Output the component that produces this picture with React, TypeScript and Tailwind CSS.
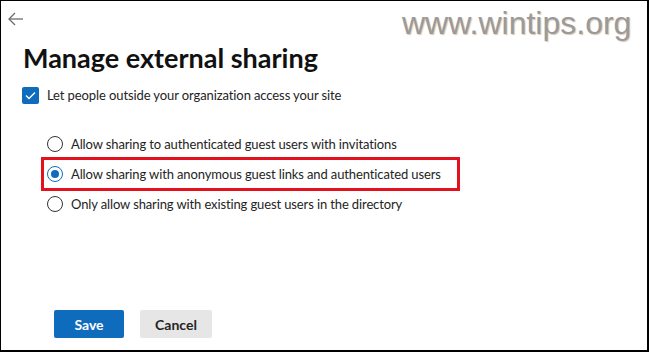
import React from "react";

function Radio({ checked, label }: { checked?: boolean; label: string }) {
  return (
    <div className="flex items-center h-[30px]">
      <span
        className={
          "w-[16px] h-[16px] rounded-full border flex items-center justify-center shrink-0 " +
          (checked ? "border-[#0f6cbd]" : "border-[#333333]")
        }
      >
        {checked && <span className="w-[8px] h-[8px] rounded-full bg-[#0f6cbd]" />}
      </span>
      <span className="ml-[8px] text-[13px] tracking-[-0.12px] text-[#242424] leading-none">{label}</span>
    </div>
  );
}

export default function App() {
  return (
    <div
      className="relative w-[649px] h-[352px] bg-white border-t border-l border-r-2 border-b-2 border-black overflow-hidden"
      style={{ fontFamily: 'Lato, "Noto Sans", sans-serif' }}
    >
      <div
        className="absolute left-[401px] top-[2px] text-[32px] text-[#9a9a9a] leading-[40px]"
        style={{ fontFamily: '"Liberation Sans", Arial, sans-serif', textShadow: "1px 1px 1px #d9c9b8" }}
      >
        www.wintips.org
      </div>
      <div className="pl-[6px] pt-[10px]">
        <svg width="17" height="16" viewBox="0 0 17 16" fill="none" stroke="#6b6b6b" strokeWidth="1.3">
          <path d="M16 8H2" />
          <path d="M8 2L2 8l6 6" />
        </svg>
      </div>
      <h1 className="pl-[22px] mt-[13px] text-[27px] font-bold text-[#111] leading-[36px]">
        Manage external sharing
      </h1>
      <div className="flex items-center pl-[21px] mt-[11px]">
        <span className="w-[17px] h-[17px] rounded-[2px] bg-[#0f6cbd] flex items-center justify-center">
          <svg width="11" height="9" viewBox="0 0 11 9" fill="none" stroke="white" strokeWidth="1.3">
            <path d="M1 4.5l3 3L10 1.5" />
          </svg>
        </span>
        <span className="ml-[8px] text-[13px] tracking-[-0.1px] text-[#242424] leading-none">
          Let people outside your organization access your site
        </span>
      </div>
      <div className="pl-[46px] mt-[25px] flex flex-col">
        <Radio label="Allow sharing to authenticated guest users with invitations" />
        <div className="relative">
          <div className="absolute -left-[6px] -top-[2px] w-[419px] h-[34px] border-[3px] border-[#e3101e] pointer-events-none" />
          <Radio checked label="Allow sharing with anonymous guest links and authenticated users" />
        </div>
        <Radio label="Only allow sharing with existing guest users in the directory" />
      </div>
      <div className="flex gap-[16px] pl-[53px] mt-[91px]">
        <button className="w-[70px] h-[28px] bg-[#0f6cbd] text-white text-[14px] font-bold rounded-[2px]">
          Save
        </button>
        <button className="w-[72px] h-[28px] bg-[#e6e6e6] text-[#242424] text-[14px] font-bold rounded-[2px]">
          Cancel
        </button>
      </div>
    </div>
  );
}
